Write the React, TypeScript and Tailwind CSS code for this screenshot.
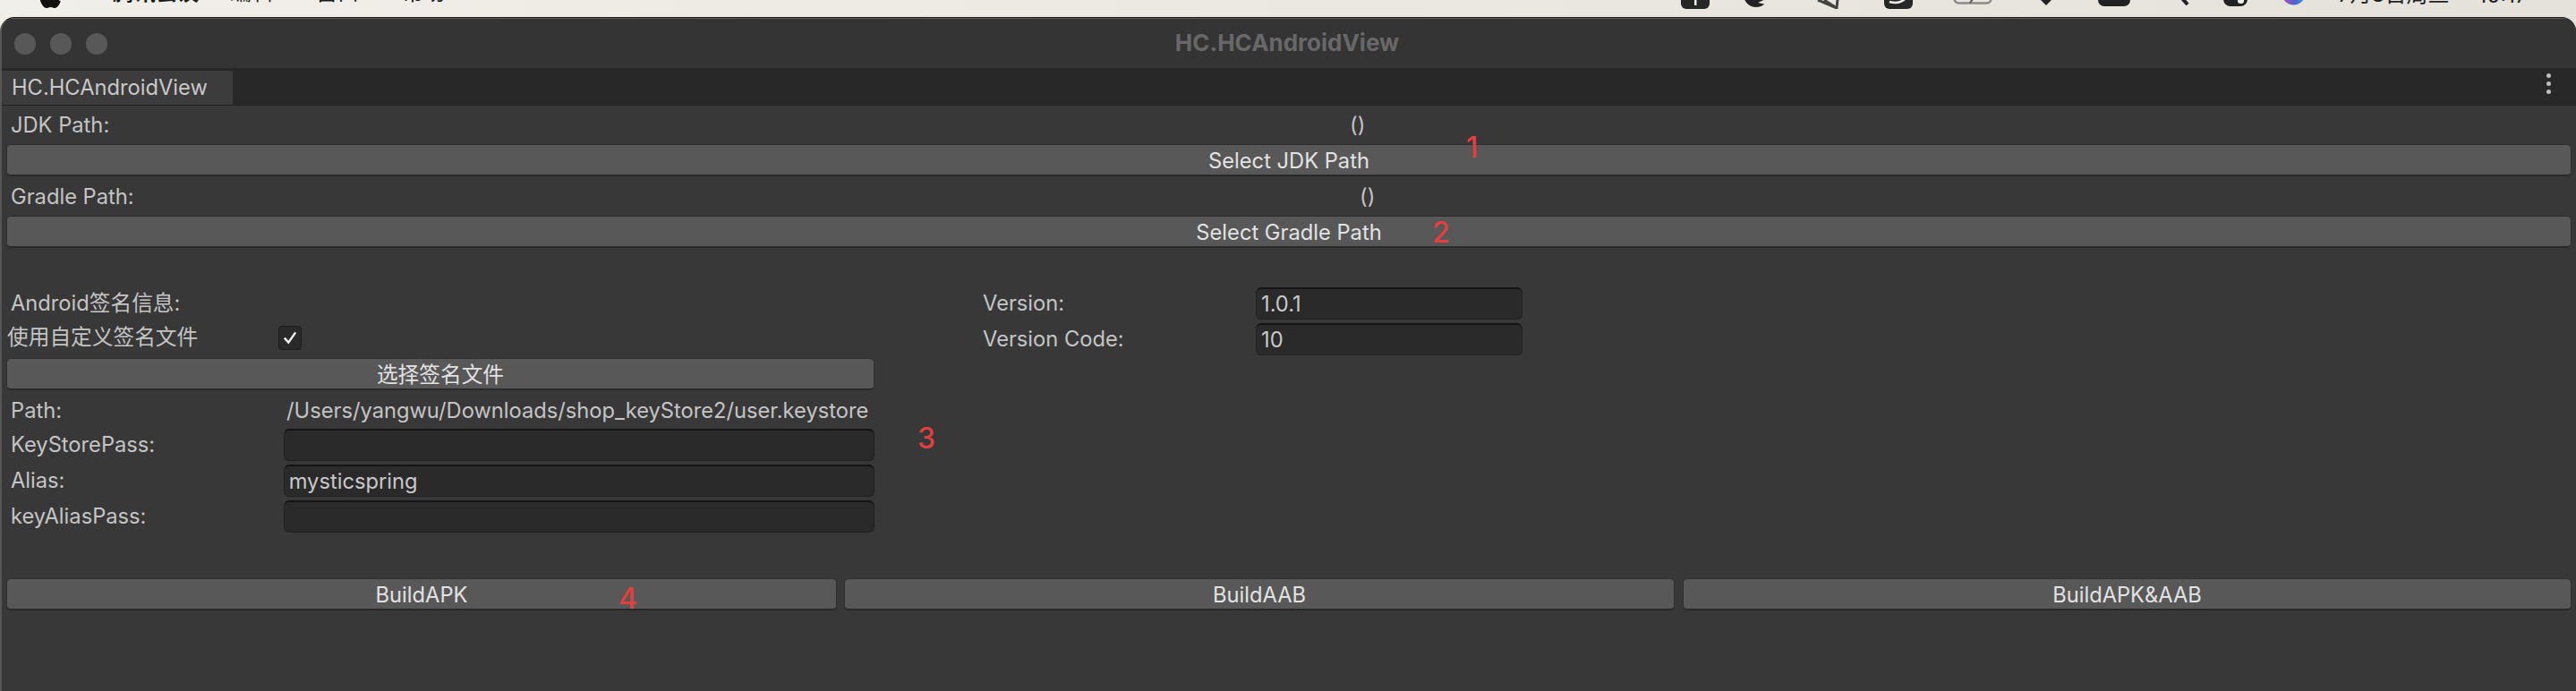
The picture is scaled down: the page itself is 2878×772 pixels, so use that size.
import React from "react";
import { FaApple } from "react-icons/fa";

const FONT = "font-['Inter','Noto_Sans_CJK_SC',sans-serif]";
const BTN = "flex items-center justify-center h-[36px] pt-[2px] rounded-[5px] bg-[#585858] border border-[#2f2f2f] border-b-2 border-b-[#292929] text-[#e2e2e2] text-[23.7px] leading-none";
const INPUT = "flex items-center h-[36px] rounded-[6px] bg-[#2a2a2a] border border-[#212121] border-t-2 border-t-[#141414] text-[#c8c8c8] text-[23.7px] leading-none pl-[5px]";
const LABEL = "text-[#c4c4c4] text-[23.7px] leading-none";
const NUM = "absolute text-[#e23f3f] text-[32px] font-medium leading-none";

function MenuBar() {
  return (
    <div className="flex items-end h-[19px] overflow-hidden text-[24px] leading-[24px] text-[#1a1a1a]">
      <FaApple className="w-[32px] h-[32px] ml-[40px] mb-[8px] text-[#111] shrink-0" />
      <span className="ml-[54px] mb-[15px] font-semibold whitespace-nowrap w-[92px]">腾讯会议</span>
      <span className="ml-[39px] mb-[15px] whitespace-nowrap w-[52px]">编辑</span>
      <span className="ml-[44px] mb-[15px] whitespace-nowrap w-[50px]">窗口</span>
      <span className="ml-[46px] mb-[15px] whitespace-nowrap w-[48px]">帮助</span>
      <svg className="ml-[1381px] mb-[9px] shrink-0" width="32" height="30" viewBox="0 0 32 30">
        <rect width="32" height="30" rx="6" fill="#262626" />
        <rect x="15" y="16" width="2.5" height="10" fill="#eee" />
      </svg>
      <svg className="ml-[38px] mb-[10px] shrink-0" width="29" height="30" viewBox="0 0 29 30">
        <circle cx="14" cy="15" r="14" fill="#222" />
        <path d="M16 24 L29 18 L29 27 Z" fill="#e8e5de" />
      </svg>
      <svg className="ml-[53px] mb-[9px] shrink-0" width="26" height="30" viewBox="0 0 26 30">
        <path d="M1 20 L22 29 L24 10 M8 20 L22 29" fill="none" stroke="#444" strokeWidth="3" />
      </svg>
      <svg className="ml-[49px] mb-[9px] shrink-0" width="32" height="30" viewBox="0 0 32 30">
        <rect width="32" height="30" rx="6" fill="#262626" />
        <path d="M6 22 Q18 25 24 18" fill="none" stroke="#eee" strokeWidth="2.5" />
      </svg>
      <svg className="ml-[45px] mb-[14px] shrink-0" width="44" height="30" viewBox="0 0 44 30">
        <rect x="1.5" y="1.5" width="41" height="27" rx="5" fill="none" stroke="#8a8a8a" strokeWidth="2.5" />
        <path d="M19 28 L25 20" stroke="#555" strokeWidth="2" />
      </svg>
      <svg className="ml-[52px] mb-[13px] shrink-0" width="16" height="30" viewBox="0 0 16 30">
        <path d="M0 10 H16 V22 L8 30 L0 22 Z" fill="#222" />
      </svg>
      <svg className="ml-[50px] mb-[12px] shrink-0" width="36" height="30" viewBox="0 0 36 30">
        <rect width="36" height="30" rx="7" fill="#222" />
      </svg>
      <svg className="ml-[42px] mb-[13px] shrink-0" width="24" height="30" viewBox="0 0 24 30">
        <circle cx="8" cy="12" r="10" fill="none" stroke="#222" strokeWidth="3" />
        <path d="M14 20 L22 29" stroke="#222" strokeWidth="4" />
      </svg>
      <svg className="ml-[38px] mb-[12px] shrink-0" width="27" height="30" viewBox="0 0 27 30">
        <rect width="27" height="30" rx="8" fill="#222" />
        <rect x="16" y="18" width="7" height="9" rx="3" fill="#eee" />
      </svg>
      <svg className="ml-[38px] mb-[12px] shrink-0" width="27" height="30" viewBox="0 0 27 30">
        <defs>
          <linearGradient id="siri" x1="0" y1="0" x2="1" y2="0">
            <stop offset="0" stopColor="#b04fb0" />
            <stop offset="0.55" stopColor="#5560d0" />
            <stop offset="1" stopColor="#2fa8e0" />
          </linearGradient>
        </defs>
        <circle cx="13.5" cy="15" r="13.5" fill="url(#siri)" />
      </svg>
      <span className="ml-[36px] mb-[13px] whitespace-nowrap text-[#222]">7月8日周三</span>
      <span className="ml-[32px] mb-[12px] whitespace-nowrap text-[#222]">10:17</span>
    </div>
  );
}

function Window() {
  return (
    <div className={`relative flex flex-col flex-1 rounded-t-[16px] overflow-hidden border-t border-t-[#1c1c1c] border-l-2 border-l-[#565656] bg-[#383838] ${FONT}`}>
      <div className="flex items-center justify-center h-[56px] bg-[#343434] border-t border-t-[#5e5e5e] -ml-[2px] relative">
        <div className="absolute left-[16px] top-[16px] flex gap-[16px]">
          <span className="w-[24px] h-[24px] rounded-full bg-[#585858]" />
          <span className="w-[24px] h-[24px] rounded-full bg-[#585858]" />
          <span className="w-[24px] h-[24px] rounded-full bg-[#585858]" />
        </div>
        <span className="text-[26px] font-bold text-[#686868] leading-none -mt-[2px] ml-[-2px]">HC.HCAndroidView</span>
      </div>
      <div className="flex items-end justify-between h-[42px] bg-[#282828] border-b border-b-[#232323] -ml-[2px]">
        <div className="flex items-center w-[260px] h-[38px] bg-[#3c3c3c] rounded-tr-[3px] pl-[13px] text-[#c8c8c8] text-[23.7px] leading-none">HC.HCAndroidView</div>
        <div className="flex flex-col gap-[4px] mr-[28px] mb-[12px]">
          <span className="w-[5px] h-[5px] rounded-full bg-[#bdbdbd]" />
          <span className="w-[5px] h-[5px] rounded-full bg-[#bdbdbd]" />
          <span className="w-[5px] h-[5px] rounded-full bg-[#bdbdbd]" />
        </div>
      </div>
      <div className="flex flex-col pl-[5px] pr-[5px]">
        <div className="flex items-center h-[43px] pt-[1px] pl-[5px]">
          <span className={`${LABEL} w-[1496px]`}>JDK Path:</span>
          <span className={LABEL}>()</span>
        </div>
        <button className={BTN}>Select JDK Path</button>
        <div className="flex items-center h-[44px] pt-[1px] pl-[5px]">
          <span className={`${LABEL} w-[1507px]`}>Gradle Path:</span>
          <span className={LABEL}>()</span>
        </div>
        <button className={BTN}>Select Gradle Path</button>
        <div className="flex mt-[44px]">
          <div className="flex flex-col w-[970px]">
            <div className="flex items-center h-[36px] pl-[5px]">
              <span className={LABEL}>Android签名信息:</span>
            </div>
            <div className="flex items-center h-[40px] mb-[3px] pl-[1px]">
              <span className={`${LABEL} w-[303px]`}>使用自定义签名文件</span>
              <span className="flex items-center justify-center w-[26px] h-[27px] rounded-[4px] bg-[#2a2a2a] border border-[#1c1c1c]">
                <svg width="18" height="18" viewBox="0 0 16 16">
                  <path d="M2.5 8.5 L6.5 13 L13.5 3" fill="none" stroke="#f2f2f2" strokeWidth="2.2" />
                </svg>
              </span>
            </div>
            <button className={BTN}>选择签名文件</button>
            <div className="flex items-center h-[43px] pt-[3px] pl-[5px]">
              <span className={`${LABEL} w-[308px]`}>Path:</span>
              <span className={`${LABEL} whitespace-nowrap`}>/Users/yangwu/Downloads/shop_keyStore2/user.keystore</span>
            </div>
            {[
              ["KeyStorePass:", ""],
              ["Alias:", "mysticspring"],
              ["keyAliasPass:", ""],
            ].map(([label, value]) => (
              <div key={label} className="flex items-center h-[36px] mb-[4px] pl-[5px]">
                <span className={`${LABEL} w-[305px]`}>{label}</span>
                <div className={`${INPUT} w-[661px]`}>{value}</div>
              </div>
            ))}
          </div>
          <div className="flex flex-col ml-[121px] gap-[4px]">
            {[
              ["Version:", "1.0.1"],
              ["Version Code:", "10"],
            ].map(([label, value]) => (
              <div key={label} className="flex items-center h-[36px]">
                <span className={`${LABEL} w-[305px]`}>{label}</span>
                <div className={`${INPUT} w-[298px]`}>{value}</div>
              </div>
            ))}
          </div>
        </div>
        <div className="flex mt-[47px]">
          <button className={`${BTN} w-[928px]`}>BuildAPK</button>
          <button className={`${BTN} w-[928px] ml-[8px]`}>BuildAAB</button>
          <button className={`${BTN} w-[993px] ml-[9px]`}>BuildAPK&amp;AAB</button>
        </div>
      </div>
      <span className={`${NUM} left-[1636px] top-[129px]`}>1</span>
      <span className={`${NUM} left-[1598px] top-[224px]`}>2</span>
      <span className={`${NUM} left-[1023px] top-[454px]`}>3</span>
      <span className={`${NUM} left-[689px] top-[633px]`}>4</span>
    </div>
  );
}

export default function App() {
  return (
    <div className={`flex flex-col w-[2878px] h-[772px] overflow-hidden bg-gradient-to-r from-[#f1efe9] to-[#e5e2db] ${FONT}`}>
      <MenuBar />
      <Window />
    </div>
  );
}
